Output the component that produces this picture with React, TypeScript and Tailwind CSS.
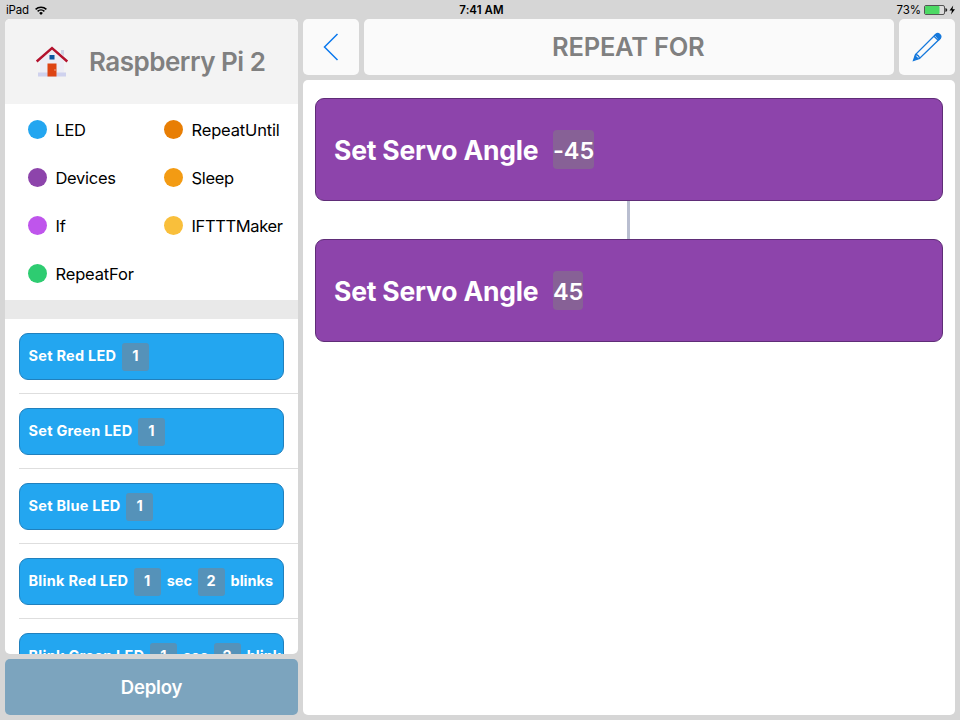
import React from "react";

type Category = { name: string; dot: string; tracking: string };

const categories: Category[] = [
  { name: "LED", dot: "bg-[#23a6f0]", tracking: "tracking-[-0.4px]" },
  { name: "RepeatUntil", dot: "bg-[#e87e04]", tracking: "tracking-[-0.16px]" },
  { name: "Devices", dot: "bg-[#8d44ab]", tracking: "tracking-[-0.3px]" },
  { name: "Sleep", dot: "bg-[#f39b13]", tracking: "tracking-[-0.3px]" },
  { name: "If", dot: "bg-[#bf55ec]", tracking: "tracking-[-0.2px]" },
  { name: "IFTTTMaker", dot: "bg-[#f9bf3b]", tracking: "tracking-[-0.36px]" },
  { name: "RepeatFor", dot: "bg-[#2ecc71]", tracking: "tracking-[-0.16px]" },
];

type Part = string | number;

const commands: Part[][] = [
  ["Set Red LED", 1],
  ["Set Green LED", 1],
  ["Set Blue LED", 1],
  ["Blink Red LED", 1, "sec", 2, "blinks"],
  ["Blink Green LED", 1, "sec", 2, "blinks"],
];

function StatusBar() {
  return (
    <div className="grid h-[19px] shrink-0 grid-cols-3 items-center px-[5px] pt-px text-[11.5px] leading-[18px] text-black">
      <div className="flex items-center gap-[6px] pl-px">
        <span className="tracking-[-0.2px]">iPad</span>
        <svg width="12" height="9" viewBox="0 0 12 9" fill="none" stroke="#000" strokeWidth="1.5">
          <path d="M0.6 3.4a7.7 7.7 0 0 1 10.8 0" />
          <path d="M2.6 5.4a4.9 4.9 0 0 1 6.8 0" />
          <path d="M6 8.9L4.1 7a2.7 2.7 0 0 1 3.8 0z" fill="#000" stroke="none" />
        </svg>
      </div>
      <div className="pl-[3px] text-center font-semibold tracking-[0.05px]">7:41 AM</div>
      <div className="flex items-center justify-end">
        <span className="mr-[3px] tracking-[-0.1px]">73%</span>
        <svg width="31" height="10" viewBox="0 0 31 10">
          <rect x="0.5" y="0.5" width="20" height="9" rx="1.5" fill="#dcdcdc" stroke="#555" />
          <rect x="1" y="1" width="14.5" height="8" rx="1" fill="#4cd964" />
          <path d="M21.4 3q1.900.4 1.900 2t-1.900 2z" fill="#222" />
          <path d="M29.200 0.600L25.500 5.500h2.500L27 9.400 31 4.300h-2.500z" fill="#000" />
        </svg>
      </div>
    </div>
  );
}

function HouseIcon() {
  return (
    <svg width="34" height="34" viewBox="0 0 34 34" fill="none">
      <path d="M5 16L17 5l12 11v14H5z" fill="#ededf5" />
      <path d="M26 5h3v6l-3-2.500z" fill="#cfd3e6" />
      <path d="M3 27.500h28v4H3z" fill="#cfd2ee" />
      <path d="M12.500 18.500h9V31.500h-9z" fill="#dd4414" />
      <path d="M19.500 24h1v2h-1z" fill="#f0a080" />
      <path d="M14.500 10h5v4.500h-5z" fill="#0b55a0" />
      <path d="M1.700 16.500L17 3 32.300 16.500" stroke="#b3122d" strokeWidth="2.400" />
    </svg>
  );
}

function CommandCard({ parts }: { parts: Part[] }) {
  return (
    <li className="flex h-[75px] shrink-0 flex-col pl-[14px]">
      <div className="mt-[14px] mr-[14px] flex h-[47px] shrink-0 items-center overflow-hidden rounded-[9px] border border-[#2180bd] bg-[#23a6f0] pl-[8.500px] text-[14.500px] font-bold whitespace-nowrap text-white">
        {parts.map((part, i) =>
          typeof part === "number" ? (
            <span key={i} className="mr-[6px] ml-[5.500px] flex h-7 w-[27px] shrink-0 items-center justify-center rounded-[3px] bg-[#5592b9] pb-px">
              {part}
            </span>
          ) : (
            <span key={i} className={i === 0 ? "pb-[2px] tracking-[0.260px]" : "pb-[2px] tracking-[0px]"}>{part}</span>
          )
        )}
      </div>
      <div className="mt-[13px] h-px bg-[#dedede]" />
    </li>
  );
}

function ServoBlock({ value }: { value: string }) {
  return (
    <div className="flex h-[103px] items-center rounded-[9px] border border-[#5f2d77] bg-[#8d44ab] pl-[18px] text-white">
      <span className="w-[204px] pt-[3px] text-[26.500px] font-bold tracking-[-0.200px] whitespace-nowrap">Set Servo Angle</span>
      <span className="ml-[15px] flex h-[39px] items-center rounded-[4px] bg-[#876196] pt-[2px] text-[23.500px] font-semibold tracking-[-0.100px]">
        {value}
      </span>
    </div>
  );
}

export default function App() {
  return (
    <div className="flex h-[720px] w-[960px] flex-col overflow-hidden bg-[#d6d6d6] font-['Inter','Liberation_Sans',sans-serif]">
      <StatusBar />
      <div className="flex min-h-0 flex-1 gap-[5px] pr-[5.500px] pb-[5px] pl-[5px]">
        <aside className="flex w-[293px] shrink-0 flex-col gap-[5px]">
          <div className="flex min-h-0 flex-1 flex-col overflow-hidden rounded-[5px] bg-white">
            <header className="flex h-[85px] shrink-0 items-center bg-[#f3f3f3] pl-[30px]">
              <HouseIcon />
              <h1 className="ml-[20px] text-[26px] font-semibold tracking-[-0.5px] whitespace-nowrap text-[#808080]">Raspberry Pi 2</h1>
            </header>
            <ul className="grid h-[196px] shrink-0 auto-rows-[48px] grid-cols-[136px_1fr] content-start pt-[1.500px] pl-[23px]">
              {categories.map((c) => (
                <li key={c.name} className="flex items-center gap-[8.500px] text-[16.500px] whitespace-nowrap text-black">
                  <span className={"size-[19px] shrink-0 rounded-full " + c.dot} />
                  <span className={"pt-px " + c.tracking}>{c.name}</span>
                </li>
              ))}
            </ul>
            <div className="h-[19px] shrink-0 bg-[#e9e9e9]" />
            <ul className="flex min-h-0 flex-1 flex-col overflow-hidden">
              {commands.map((parts, i) => (
                <CommandCard key={i} parts={parts} />
              ))}
            </ul>
          </div>
          <button className="h-14 shrink-0 rounded-[5px] bg-[#7ca4be] pt-px text-[18.500px] font-semibold tracking-[-0.200px] text-white">Deploy</button>
        </aside>
        <main className="flex min-w-0 flex-1 flex-col gap-[5px]">
          <div className="flex h-14 shrink-0 gap-[5px]">
            <button className="flex w-14 items-center justify-center rounded-[5px] bg-[#fafafa]">
              <svg width="16" height="28" viewBox="0 0 16 28" fill="none" stroke="#0a78ee" strokeWidth="1.500">
                <path d="M14.500 1L1.500 14l13 13" />
              </svg>
            </button>
            <h2 className="flex flex-1 items-center justify-center rounded-[5px] bg-[#fafafa] pt-px pr-px text-[25.500px] font-semibold tracking-[-0.250px] text-[#808080]">REPEAT FOR</h2>
            <button className="flex w-14 items-center justify-center rounded-[5px] bg-[#fafafa]">
              <svg width="30" height="30" viewBox="0 0 30 30" fill="none" stroke="#1478dc" strokeWidth="1.300">
                <path d="M1.500 28.500l2-6L23.800 2.200q2-1.500 4 .3t.3 4L7.500 26.500z" />
                <path d="M3.500 22.500q3.500.5 4 4M22 4.200l4.200 4.200" />
                <path d="M22.500 3q2.800-2.500 5.200-.4t.3 4.800l-1 1z" fill="#1478dc" stroke="none" />
                <path d="M1.500 28.500l1.500-5.500 4 3.800z" fill="#1478dc" stroke="none" />
              </svg>
            </button>
          </div>
          <section className="min-h-0 flex-1 rounded-[5px] bg-white pt-[18px] pr-[12px] pl-[12px]">
            <ServoBlock value="-45" />
            <div className="mx-auto h-[38px] w-[3px] bg-[#b9bed0]" />
            <ServoBlock value="45" />
          </section>
        </main>
      </div>
    </div>
  );
}
